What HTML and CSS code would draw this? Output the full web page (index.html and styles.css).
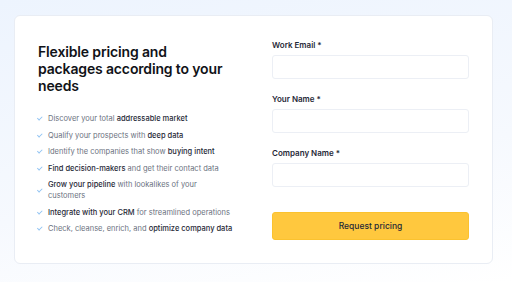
FILE: index.html
```html
<!DOCTYPE html>
<html lang="en">
  <head>
    <meta charset="UTF-8" />
    <meta name="viewport" content="width=device-width, initial-scale=1.0" />
    <title>Request pricing</title>
    <link rel="stylesheet" href="styles.css">
  </head>
  <body>
    <div class="pricing-card">
      <div class="pricing-info">
        <h1 class="pricing-title">Flexible pricing and packages according to your needs</h1>
        <ul class="feature-list">
          <li><span class="check"></span><span>Discover your total <b>addressable market</b></span></li>
          <li><span class="check"></span><span>Qualify your prospects with <b>deep data</b></span></li>
          <li><span class="check"></span><span>Identify the companies that show <b>buying intent</b></span></li>
          <li><span class="check"></span><span><b>Find decision-makers</b> and get their contact data</span></li>
          <li><span class="check"></span><span><b>Grow your pipeline</b> with lookalikes of your<br>customers</span></li>
          <li><span class="check"></span><span><b>Integrate with your CRM</b> for streamlined operations</span></li>
          <li><span class="check"></span><span>Check, cleanse, enrich, and <b>optimize company data</b></span></li>
        </ul>
      </div>

      <form class="pricing-form" id="pricingForm">
        <div class="form-group">
          <label for="email">Work Email *</label>
          <input type="email" id="email" required>
        </div>
        <div class="form-group">
          <label for="name">Your Name *</label>
          <input type="text" id="name" required>
        </div>
        <div class="form-group">
          <label for="company">Company Name *</label>
          <input type="text" id="company" required>
        </div>
        <button type="submit">Request pricing</button>
      </form>
    </div>
  </body>
</html>
```

FILE: styles.css
```css
* {
  margin: 0;
  padding: 0;
  box-sizing: border-box;
}

body {
  width: 512px;
  height: 282px;
  overflow: hidden;
  background: linear-gradient(170deg, #edf4fe 0%, #f6f9fe 60%, #ffffff 100%);
  font-family: 'Inter', sans-serif;
  color: #1f2937;
}

.pricing-card {
  margin: 15px 0 0 14px;
  width: 479px;
  height: 249px;
  background: #ffffff;
  border: 1px solid #e9edf4;
  border-radius: 6px;
  display: grid;
  grid-template-columns: 1fr 197px;
  padding: 0 23px 0 23px;
}

.pricing-info {
  padding-top: 27px;
}

.pricing-title {
  font-size: 14px;
  line-height: 17px;
  font-weight: 600;
  color: #111318;
  width: 192px;
  letter-spacing: -0.15px;
}

.feature-list {
  list-style: none;
  margin-top: 19px;
  display: flex;
  flex-direction: column;
  gap: 5.5px;
}

.feature-list li {
  display: flex;
  align-items: center;
  gap: 5px;
  font-size: 7.5px;
  line-height: 11px;
  color: #6b7280;
  white-space: nowrap;
}

.feature-list b {
  font-weight: 500;
  color: #1f2937;
}

.check {
  flex: none;
  width: 5px;
  height: 3px;
  border-left: 1px solid #8fc2f2;
  border-bottom: 1px solid #8fc2f2;
  transform: rotate(-45deg) translateY(-1px);
}

.pricing-form {
  padding-top: 24px;
}

.form-group {
  margin-bottom: 15px;
}

label {
  display: block;
  font-size: 8px;
  line-height: 10px;
  font-weight: 600;
  color: #1f2937;
  margin-bottom: 5px;
}

input {
  width: 100%;
  height: 24px;
  border: 1px solid #eceff5;
  border-radius: 3px;
  background: #ffffff;
}

button {
  width: 100%;
  height: 28px;
  margin-top: 10px;
  background: #ffc83e;
  border: 1px solid #fbc22f;
  border-radius: 3px;
  font-family: 'Inter', sans-serif;
  font-size: 8.5px;
  font-weight: 500;
  color: #1f2937;
  cursor: pointer;
}
```
